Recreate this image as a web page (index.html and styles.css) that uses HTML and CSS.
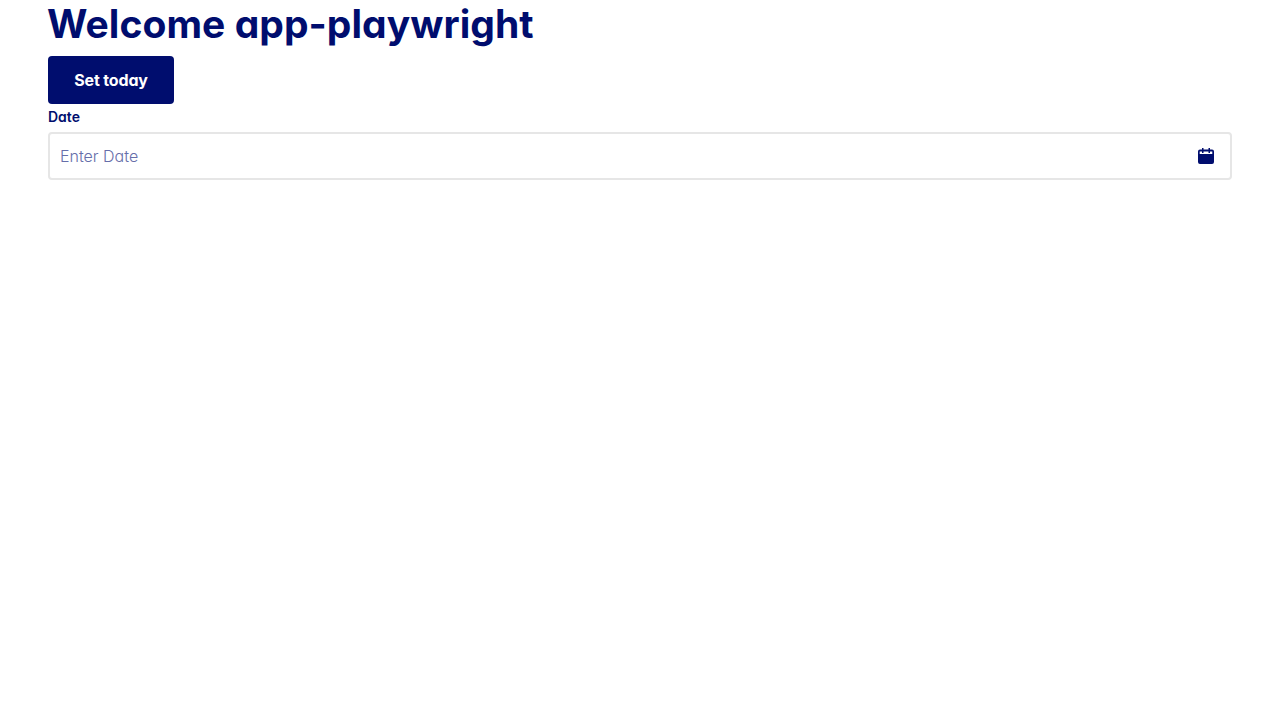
FILE: index.html
```html
<!DOCTYPE html>
<html lang="en">
<head>
<meta charset="utf-8">
<title>Welcome app-playwright</title>
<link rel="stylesheet" href="styles.css">
</head>
<body>
<main class="page">
  <h1 class="title">Welcome app-playwright</h1>
  <button class="button" type="button">Set today</button>
  <label class="label" for="date">Date</label>
  <div class="field">
    <input class="input" id="date" type="text" placeholder="Enter Date">
    <svg class="icon" viewBox="0 0 16 16" width="16" height="16" aria-hidden="true">
      <path fill="currentColor" fill-rule="evenodd" d="M4 0h1.500v1.600h5V0H12v1.600h2a2 2 0 0 1 2 2V14a2 2 0 0 1-2 2H2a2 2 0 0 1-2-2V3.600a2 2 0 0 1 2-2h2zM1.700 3.600V6h12.600V3.600H12V5h-1.500V3.600h-5V5H4V3.600z"/>
    </svg>
  </div>
</main>
</body>
</html>
```
FILE: styles.css
```css
* { box-sizing: border-box; }
body {
  margin: 0;
  background: #fff;
  color: #000d6e;
  font-family: Inter, "Liberation Sans", sans-serif;
  font-feature-settings: "cv11" 1;
}
.page { padding: 0 48px; }
.title {
  margin: 0 0 8px -1px;
  font-size: 39px;
  line-height: 48px;
  font-weight: 700;
  letter-spacing: 0.05px;
  white-space: nowrap;
}
.button {
  display: block;
  width: 126px;
  height: 48px;
  padding: 0;
  border: 0;
  border-radius: 4px;
  background: #000d6e;
  color: #fff;
  font: inherit;
  font-size: 16px;
  font-weight: 700;
  letter-spacing: -0.15px;
  white-space: nowrap;
}
.label {
  display: block;
  height: 28px;
  font-size: 14px;
  line-height: 26px;
  font-weight: 600;
}
.field {
  display: flex;
  align-items: center;
  height: 48px;
  padding: 0 16px 0 10px;
  border: 2px solid #e6e6e6;
  border-radius: 4px;
}
.input {
  flex: 1;
  height: 44px;
  padding: 0;
  border: 0;
  outline: 0;
  background: none;
  color: #000d6e;
  font: inherit;
  font-size: 16px;
  font-weight: 350;
  font-feature-settings: inherit;
}
.input::placeholder { color: #666eaa; opacity: 1; }
.icon { display: block; }
```
